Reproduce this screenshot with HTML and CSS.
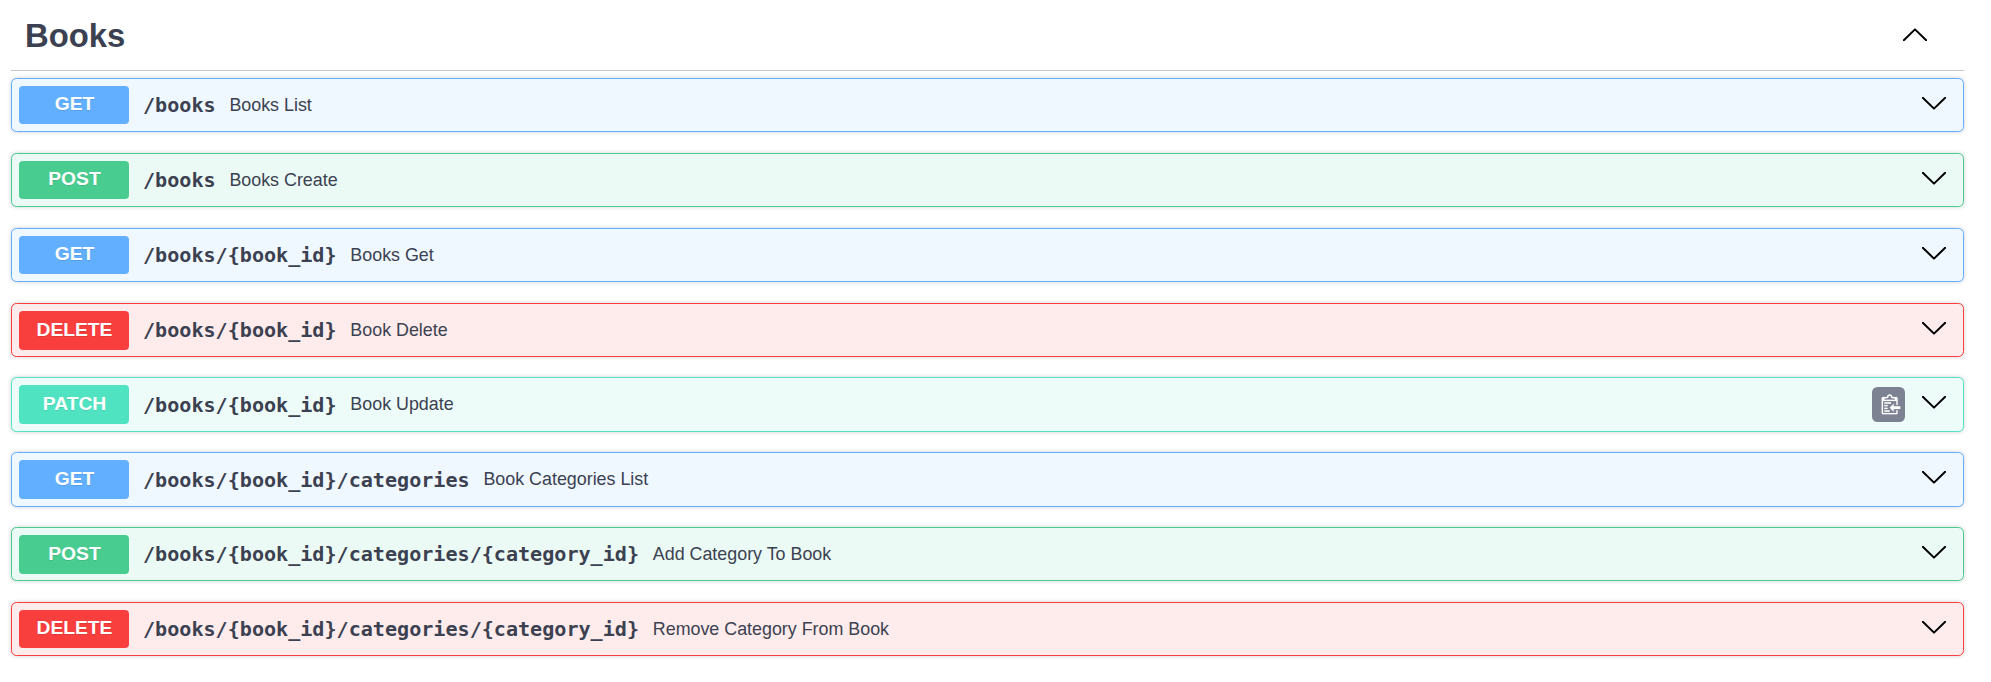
FILE: index.html
```html
<!DOCTYPE html>
<html lang="en">
<head>
<meta charset="utf-8">
<title>Books API</title>
<link rel="stylesheet" href="styles.css">
</head>
<body>
<svg class="defs" aria-hidden="true">
  <symbol id="down" viewBox="0 0 24 13"><path d="M.8 .8 12 11.6 23.2.8" fill="none" stroke="#000" stroke-width="2" stroke-linecap="round" stroke-linejoin="round"/></symbol>
</svg>
<main class="section">
  <header class="tag"><h1 class="tag-name">Books</h1><svg class="arrow arrow-up"><use href="#down"/></svg></header>
  <div class="operations">
    <div class="op get"><span class="method">GET</span><span class="path">/books</span><span class="summary">Books List</span><svg class="arrow"><use href="#down"/></svg></div>
    <div class="op post"><span class="method">POST</span><span class="path">/books</span><span class="summary">Books Create</span><svg class="arrow"><use href="#down"/></svg></div>
    <div class="op get"><span class="method">GET</span><span class="path">/books/{book_id}</span><span class="summary">Books Get</span><svg class="arrow"><use href="#down"/></svg></div>
    <div class="op delete"><span class="method">DELETE</span><span class="path">/books/{book_id}</span><span class="summary">Book Delete</span><svg class="arrow"><use href="#down"/></svg></div>
    <div class="op patch"><span class="method">PATCH</span><span class="path">/books/{book_id}</span><span class="summary">Book Update</span>
      <span class="copy"><svg class="copy-icon" viewBox="0 0 15 16"><path fill="#fff" fill-rule="evenodd" d="M4 12h4v1H4v-1zm5-6H4v1h5V6zm2 3V7l-3 3 3 3v-2h5V9h-5zM6.500 8H4v1h2.500V8zM4 11h2.500v-1H4v1zm9 1h1v2c-.02.28-.11.52-.3.7-.19.18-.42.28-.7.3H3c-.55 0-1-.45-1-1V3c0-.55.45-1 1-1h3c0-1.110.890-2 2-2 1.110 0 2 .890 2 2h3c.55 0 1 .45 1 1v5h-1V5H3v9h10v-2zM4 4h8c0-.55-.45-1-1-1h-1c-.55 0-1-.45-1-1s-.45-1-1-1-1 .45-1 1-.45 1-1 1H5c-.55 0-1 .45-1 1z"/></svg></span>
      <svg class="arrow"><use href="#down"/></svg></div>
    <div class="op get"><span class="method">GET</span><span class="path">/books/{book_id}/categories</span><span class="summary">Book Categories List</span><svg class="arrow"><use href="#down"/></svg></div>
    <div class="op post"><span class="method">POST</span><span class="path">/books/{book_id}/categories/{category_id}</span><span class="summary">Add Category To Book</span><svg class="arrow"><use href="#down"/></svg></div>
    <div class="op delete"><span class="method">DELETE</span><span class="path">/books/{book_id}/categories/{category_id}</span><span class="summary">Remove Category From Book</span><svg class="arrow"><use href="#down"/></svg></div>
  </div>
</main>
</body>
</html>
```
FILE: styles.css
```css
* { box-sizing: border-box; }
body { margin: 0; background: #fff; color: #3b4151; font-family: "Liberation Sans", Arial, sans-serif; }
.defs { position: absolute; width: 0; height: 0; }
.section { margin: 0 27px 0 11px; }
.tag { display: flex; align-items: center; height: 71px; padding: 0 37px 0 14px; border-bottom: 1px solid #c4c6ca; }
.tag-name { flex: 1; margin: 0; padding-top: 2px; font-size: 32.8px; line-height: 38px; }
.arrow { flex: none; width: 24px; height: 13px; margin: 0 17px 4px 16px; }
.arrow-up { margin: 0 0 2px; transform: rotate(180deg); }
.operations { display: flex; flex-direction: column; padding-top: 7px; }
.op { display: flex; align-items: center; height: 54px; margin-bottom: 21px; padding-left: 7px; border: 1px solid; border-radius: 5.5px; box-shadow: 0 0 4px rgba(0, 0, 0, .19); }
.op:nth-child(4) { margin-bottom: 20px; }
.op:nth-child(5), .op:nth-child(6) { height: 55px; margin-bottom: 20px; }
.method { flex: none; width: 110px; height: 38px; border-radius: 4px; color: #fff; font-size: 19.25px; font-weight: 700; line-height: 36px; text-align: center; text-indent: 1px; text-shadow: 0 1px 0 rgba(0, 0, 0, .1); }
.op:nth-child(n+4):nth-child(-n+7) .method { height: 39px; line-height: 38px; }
.path { margin-left: 14px; font: 700 20.1px/26px "DejaVu Sans Mono", monospace; }
.summary { flex: 1; margin-left: 13.8px; padding-bottom: 1px; font-size: 17.875px; line-height: 22px; }
.get { border-color: #61affe; background: #eff7ff; }
.get .method { background: #61affe; }
.post { border-color: #49cc90; background: #ebfaf4; }
.post .method { background: #49cc90; }
.delete { border-color: #f93e3e; background: #feebeb; }
.delete .method { background: #f93e3e; }
.patch { border-color: #50e3c2; background: #edfcf9; }
.patch .method { background: #50e3c2; }
.copy { display: flex; align-items: center; justify-content: center; width: 33px; height: 35px; margin-right: 1px; border-radius: 5.5px; background: #7d8293; }
.copy-icon { width: 20px; height: 22px; overflow: visible; stroke: #fff; stroke-width: .12; }
```
